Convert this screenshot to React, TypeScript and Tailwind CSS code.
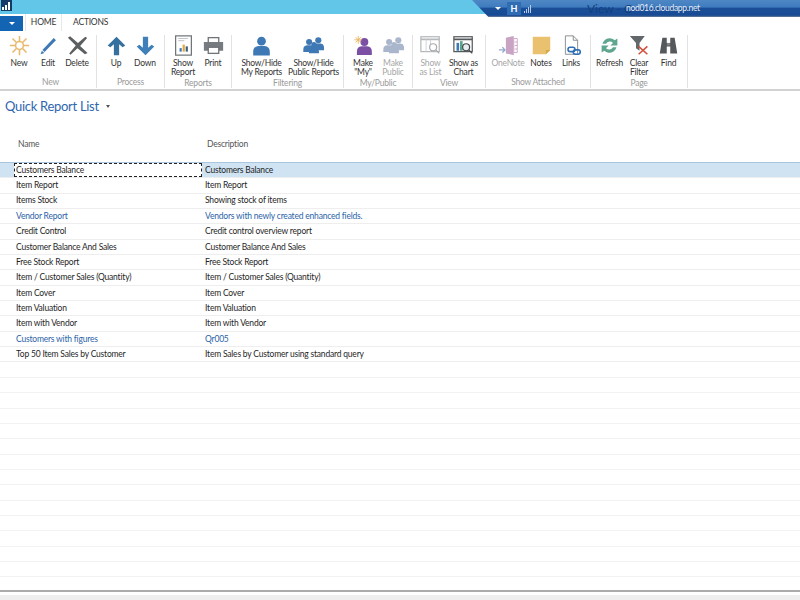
import type { ReactNode } from 'react'

const font = "font-['Lato','Liberation_Sans',sans-serif]"

const rows = [
  ['Customers Balance', 'Customers Balance'],
  ['Item Report', 'Item Report'],
  ['Items Stock', 'Showing stock of items'],
  ['Vendor Report', 'Vendors with newly created enhanced fields.', 'link'],
  ['Credit Control', 'Credit control overview report'],
  ['Customer Balance And Sales', 'Customer Balance And Sales'],
  ['Free Stock Report', 'Free Stock Report'],
  ['Item / Customer Sales (Quantity)', 'Item / Customer Sales (Quantity)'],
  ['Item Cover', 'Item Cover'],
  ['Item Valuation', 'Item Valuation'],
  ['Item with Vendor', 'Item with Vendor'],
  ['Customers with figures', 'Qr005', 'link'],
  ['Top 50 Item Sales by Customer', 'Item Sales by Customer using standard query'],
]

const Svg = ({ children }: { children: ReactNode }) => (
  <svg width="21" height="21" viewBox="0 0 24 24">{children}</svg>
)

const person = (cx: number, cy: number, r: number, color: string) => (
  <g fill={color}>
    <circle cx={cx} cy={cy} r={r} />
    <path d={`M${cx - r * 1.9} ${cy + r * 3.3}v-${r * 0.8}q0-${r * 1.3} ${r * 1.2}-${r * 1.4}h${r * 1.4}q${r * 1.2} ${r * 0.1} ${r * 1.2} ${r * 1.4}v${r * 0.8}z`} />
  </g>
)

const icons = {
  new: (
    <Svg>
      <g stroke="#e8b96e" strokeWidth="1.800">
        <path d="M12 1v6M12 17v6M1 12h6M17 12h6M4 4l4.500 4.500M15.500 15.500L20 20M20 4l-4.500 4.500M8.500 15.500L4 20" />
      </g>
      <circle cx="12" cy="12" r="4.500" fill="#fff" stroke="#e8b96e" strokeWidth="1.800" />
    </Svg>
  ),
  edit: (
    <Svg>
      <path d="M5 17L18 3.500l2.500 2.500L7.500 19.500z" fill="#3f79b5" />
      <path d="M3 22l1.300-4 3 2.500z" fill="#3f79b5" />
    </Svg>
  ),
  del: (
    <Svg>
      <path d="M1 3l2.500-1.500L12.500 9 21 2l2 1.500-8 9 8.500 8-3 1.500-8.500-7-8 7.500-1.500-1.500 7.500-9z" fill="#5b5f62" />
    </Svg>
  ),
  up: (
    <Svg>
      <path d="M12 2l10 10-3 2-4-3.500V23H9V10.500L5 14l-3-2z" fill="#35709f" />
    </Svg>
  ),
  down: (
    <Svg>
      <path d="M12 23L2 13l3-2 4 3.500V2h6v12.500l4-3.500 3 2z" fill="#4080b8" />
    </Svg>
  ),
  report: (
    <Svg>
      <rect x="3" y="1" width="18" height="22" fill="#fff" stroke="#6f7478" strokeWidth="1.400" />
      <path d="M6 4h11M6 6.500h7" stroke="#b8bcc0" />
      <path d="M7.500 19v-4h2.500v4z" fill="#3f79b5" />
      <path d="M11 19v-8h2.500v8z" fill="#e0a83c" />
      <path d="M14.500 19v-6H17v6z" fill="#3f5f7f" />
    </Svg>
  ),
  print: (
    <Svg>
      <rect x="6" y="3" width="12" height="6" fill="#fff" stroke="#6f7478" strokeWidth="1.500" />
      <path d="M1 8h22v10H1z" fill="#767b80" />
      <rect x="6" y="14" width="12" height="7" fill="#fff" stroke="#6f7478" strokeWidth="1.500" />
    </Svg>
  ),
  myReports: <Svg>{person(12, 7, 5, '#3f79b5')}</Svg>,
  publicReports: (
    <Svg>
      {person(17.5, 6, 3.5, '#3f79b5')}
      {person(7, 8, 3.5, '#3f79b5')}
      {person(12.5, 11, 3, '#3f79b5')}
    </Svg>
  ),
  makeMy: (
    <Svg>
      {person(13, 8, 4.500, '#7b4fa3')}
      <g stroke="#e8b45c" strokeWidth="1">
        <path d="M6 1v9M1.500 5.500h9M3 2.500l6 6M9 2.500l-6 6" />
      </g>
    </Svg>
  ),
  makePublic: (
    <Svg>
      {person(17.5, 6, 3.500, '#aab6cc')}
      {person(7, 8, 3.500, '#aab6cc')}
      {person(12.500, 11, 3, '#aab6cc')}
    </Svg>
  ),
  list: (
    <Svg>
      <rect x="1" y="2" width="21" height="17" fill="#fff" stroke="#b4b8bb" strokeWidth="1.400" />
      <path d="M1 5h21" stroke="#b4b8bb" strokeWidth="2" />
      <path d="M7 5v14M12 5v14" stroke="#ccd0d3" />
      <circle cx="15" cy="14" r="4" fill="#fff" stroke="#a9adb0" strokeWidth="1.400" />
      <path d="M18 17l4 4" stroke="#a9adb0" strokeWidth="1.500" />
    </Svg>
  ),
  chart: (
    <Svg>
      <rect x="1" y="2" width="21" height="17" fill="#fff" stroke="#55595c" strokeWidth="1.400" />
      <path d="M1 5h21" stroke="#55595c" strokeWidth="2" />
      <path d="M4 9h3v9H4z" fill="#3f79b5" />
      <path d="M8 7h3v11H8z" fill="#5aa58c" />
      <circle cx="15" cy="14" r="4" fill="#e8eef2" stroke="#44484b" strokeWidth="1.400" />
      <path d="M18 17l4 4" stroke="#44484b" strokeWidth="1.500" />
    </Svg>
  ),
  onenote: (
    <Svg>
      <path d="M9 3l9-2v22l-9-2z" fill="#c9a3c4" />
      <path d="M18 4h4v16h-4z" fill="#fff" stroke="#c9a3c4" />
      <path d="M19 8h3M19 12h3M19 16h3" stroke="#c9a3c4" />
      <path d="M1 17h7M5 14l3 3-3 3" fill="none" stroke="#94a9d0" strokeWidth="1.500" />
    </Svg>
  ),
  notes: (
    <Svg>
      <path d="M2 2h20v15l-5 5H2z" fill="#eac26f" />
      <path d="M22 17h-5v5z" fill="#d5a84e" />
    </Svg>
  ),
  links: (
    <Svg>
      <path d="M5 1h9l5 5v16H5z" fill="#fff" stroke="#7d8286" />
      <path d="M14 1v5h5" fill="none" stroke="#7d8286" />
      <rect x="8" y="14" width="8" height="5" rx="2.500" fill="none" stroke="#2f6fb5" strokeWidth="1.800" />
      <rect x="14" y="17" width="8" height="5" rx="2.500" fill="none" stroke="#2f6fb5" strokeWidth="1.800" />
    </Svg>
  ),
  refresh: (
    <Svg>
      <path d="M4 10a8.500 8.500 0 0 1 14-4l3-2v8h-8l3-3a5 5 0 0 0-8 1z" fill="#5fa58f" />
      <path d="M20 14a8.500 8.500 0 0 1-14 4l-3 2v-8h8l-3 3a5 5 0 0 0 8-1z" fill="#5fa58f" />
    </Svg>
  ),
  clear: (
    <Svg>
      <path d="M1 1h17l-6 8v9l-4-3V9z" fill="#62676b" />
      <path d="M11 13l10 9M21 13l-10 9" stroke="#d2503c" strokeWidth="1.800" />
    </Svg>
  ),
  find: (
    <Svg>
      <path d="M5 3h5v6h4V3h5l3 18h-8v-8h-4v8H2z" fill="#55595c" />
      <path d="M10.500 9h3v3h-3z" fill="#85898c" />
    </Svg>
  ),
}

type Btn = { label: ReactNode; icon: ReactNode; w: string; off?: boolean }

const groups: { name: string; cls: string; items: Btn[] }[] = [
  {
    name: 'New',
    cls: 'w-[92px]',
    items: [
      { label: 'New', icon: icons.new, w: 'w-[29px]' },
      { label: 'Edit', icon: icons.edit, w: 'w-[29px]' },
      { label: 'Delete', icon: icons.del, w: 'w-[29px]' },
    ],
  },
  {
    name: 'Process',
    cls: 'w-[68px]',
    items: [
      { label: 'Up', icon: icons.up, w: 'w-[29px]' },
      { label: 'Down', icon: icons.down, w: 'w-[29px]' },
    ],
  },
  {
    name: 'Reports',
    cls: 'w-[67px]',
    items: [
      { label: <>Show<br />Report</>, icon: icons.report, w: 'w-[30px]' },
      { label: 'Print', icon: icons.print, w: 'w-[30px]' },
    ],
  },
  {
    name: 'Filtering',
    cls: 'w-[112px]',
    items: [
      { label: <>Show/Hide<br />My Reports</>, icon: icons.myReports, w: 'w-[52px]' },
      { label: <>Show/Hide<br />Public Reports</>, icon: icons.publicReports, w: 'w-[52px]' },
    ],
  },
  {
    name: 'My/Public',
    cls: 'w-[69px]',
    items: [
      { label: <>Make<br />"My"</>, icon: icons.makeMy, w: 'w-[30px]' },
      { label: <>Make<br />Public</>, icon: icons.makePublic, w: 'w-[30px]', off: true },
    ],
  },
  {
    name: 'View',
    cls: 'w-[73px]',
    items: [
      { label: <>Show<br />as List</>, icon: icons.list, w: 'w-[33px]', off: true },
      { label: <>Show as<br />Chart</>, icon: icons.chart, w: 'w-[33px]' },
    ],
  },
  {
    name: 'Show Attached',
    cls: 'w-[105px]',
    items: [
      { label: 'OneNote', icon: icons.onenote, w: 'w-[36px]', off: true },
      { label: 'Notes', icon: icons.notes, w: 'w-[30px]' },
      { label: 'Links', icon: icons.links, w: 'w-[30px]' },
    ],
  },
  {
    name: 'Page',
    cls: 'w-[97px]',
    items: [
      { label: 'Refresh', icon: icons.refresh, w: 'w-[30px]' },
      { label: <>Clear<br />Filter</>, icon: icons.clear, w: 'w-[29px]' },
      { label: 'Find', icon: icons.find, w: 'w-[30px]' },
    ],
  },
]

// New and View sit a little left of the middle of their groups
const groupPad: Record<string, string> = { New: 'pr-[5px]', View: 'pr-[4px]' }

function RibbonButton({ label, icon, w, off }: Btn) {
  return (
    <div className={`${w} flex shrink-0 flex-col items-center`}>
      <div className="flex h-[21px] items-center justify-center">{icon}</div>
      <div
        className={`mt-[3px] whitespace-nowrap text-center text-[8.5px] leading-[9px] tracking-[-0.2px] ${off ? 'text-[#a6a6a6]' : 'text-[#333]'}`}
      >
        {label}
      </div>
    </div>
  )
}

export default function App() {
  return (
    <div className={`${font} flex h-[600px] w-[800px] flex-col overflow-hidden bg-white`}>
      <div className="flex h-[14px] shrink-0 items-start bg-[#62c6e8]">
        <div className="ml-[1px] flex h-[11px] w-[11px] items-end gap-[1px] bg-[#143a68] px-[1px] pb-[1px]">
          <span className="h-[3px] w-[2px] bg-white" />
          <span className="h-[5px] w-[2px] bg-white" />
          <span className="h-[8px] w-[2px] bg-white" />
        </div>
        <div className="relative z-10 ml-auto flex h-[17px] w-[328px] shrink-0 items-center bg-[linear-gradient(#4f87c4_0%,#3f7cbf_40%,#1a4f98_50%,#174a94_90%,#6d7f96_100%)] pl-[23px] [clip-path:polygon(0_0,100%_0,100%_100%,5%_100%)]">
          <span className="h-0 w-0 border-x-[3px] border-t-[3px] border-x-transparent border-t-white" />
          <span className="ml-[6px] flex h-[13px] w-[14px] items-center justify-center bg-[#2f6cb4] text-[9px] font-bold leading-none text-white">
            H
          </span>
          <div className="ml-[3px] flex items-end gap-[1px]">
            <span className="h-[2px] w-[1px] bg-[#b8cbe2]" />
            <span className="h-[4px] w-[1px] bg-[#b8cbe2]" />
            <span className="h-[6px] w-[1px] bg-[#b8cbe2]" />
            <span className="h-[8px] w-[1px] bg-[#b8cbe2]" />
          </div>
          <span className="ml-[56px] w-[39px] whitespace-nowrap text-[12px] leading-none text-[#123f80]">View - C</span>
          <span className="text-[8.5px] leading-none tracking-[-0.3px] text-[#e6edf6]">nod016.cloudapp.net</span>
        </div>
      </div>

      <div className="flex h-[17px] shrink-0 items-end">
        <div className="flex h-[15px] w-[23px] items-center justify-center bg-[#1464b4]">
          <span className="h-0 w-0 border-x-[3px] border-t-[3px] border-x-transparent border-t-white" />
        </div>
        <div className="ml-[2px] flex h-[17px] w-[37px] items-center justify-center border-x border-[#e8e8e8] text-[8.5px] tracking-[-0.2px] text-[#333]">
          HOME
        </div>
        <div className="ml-[11px] flex h-[17px] items-center text-[8.5px] tracking-[-0.2px] text-[#333]">ACTIONS</div>
      </div>

      <div className="flex h-[60px] shrink-0 border-b-2 border-[#d2d2d2] pl-[5px] pt-[4px]">
        {groups.map((g) => (
          <div key={g.name} className={`${g.cls} flex h-[53px] shrink-0 flex-col border-r border-[#e2e2e2]`}>
            <div className={`flex h-[44px] justify-center ${groupPad[g.name] ?? ''}`}>
              {g.items.map((b, i) => (
                <RibbonButton key={i} {...b} />
              ))}
            </div>
            <div className="mt-[1px] text-center text-[8.5px] leading-[11px] tracking-[-0.2px] text-[#9a9a9a]">
              {g.name}
            </div>
          </div>
        ))}
      </div>

      <div className="flex h-[36px] shrink-0 items-center pb-[5px] pl-[5px] text-[13px] tracking-[-0.3px] text-[#2f66ae]">
        Quick Report List
        <span className="ml-[7px] h-0 w-0 border-x-[2px] border-t-[3px] border-x-transparent border-t-[#555]" />
      </div>

      <div className="flex h-[35px] shrink-0 items-center text-[8.5px] tracking-[-0.2px] text-[#555]">
        <div className="w-[207px] pl-[18px]">Name</div>
        <div>Description</div>
      </div>

      <div className="flex h-[429px] shrink-0 flex-col overflow-hidden border-t border-[#a9c6de]">
        {rows.map(([name, desc, kind], i) => (
          <div
            key={name}
            className={`flex h-[15.35px] shrink-0 items-center border-b border-[#eeeeee] text-[8.5px] tracking-[-0.2px] ${kind ? 'text-[#2c5fa8]' : 'text-[#1f1f1f]'} ${i === 0 ? 'bg-[#cfe3f3]' : ''}`}
          >
            <div
              className={`ml-[14px] flex h-full w-[188px] shrink-0 items-center ${i === 0 ? 'border border-dashed border-[#222] bg-white pl-[1px]' : 'pl-[2px]'}`}
            >
              {name}
            </div>
            <div className="pl-[3px]">{desc}</div>
          </div>
        ))}
        {Array.from({ length: 14 }, (_, i) => (
          <div key={i} className="h-[15.35px] shrink-0 border-b border-[#f2f2f2]" />
        ))}
      </div>

      <div className="mt-[-1px] h-[2px] shrink-0 bg-[#ababab]" />
      <div className="mt-[3px] flex-1 bg-[#eeeeee]" />
    </div>
  )
}
